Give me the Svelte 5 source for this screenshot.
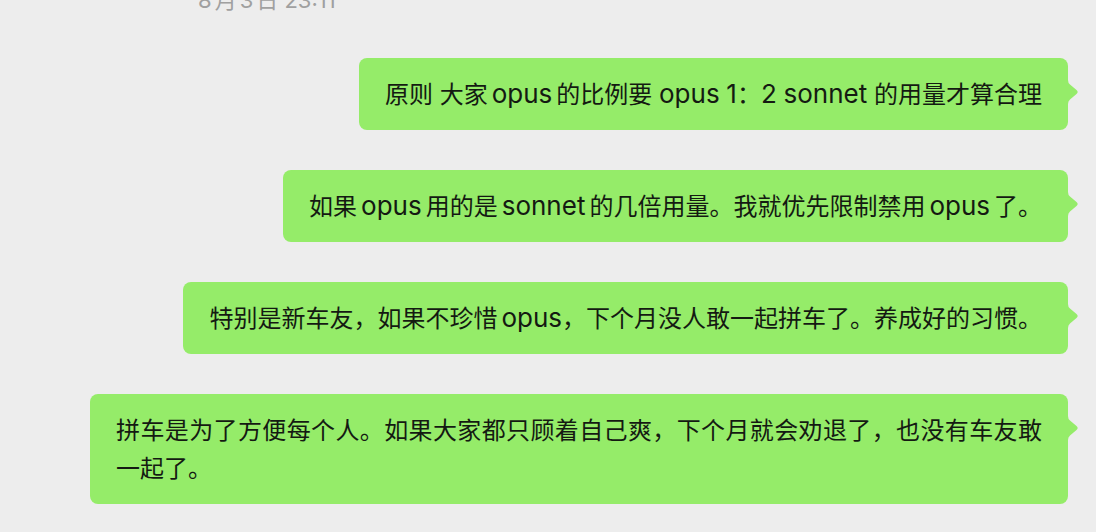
<script>
  const sentAt = '8月3日 23:11';

  const messages = [
    '原则 大家opus的比例要 opus 1：2 sonnet 的用量才算合理',
    '如果opus用的是sonnet的几倍用量。我就优先限制禁用opus了。',
    '特别是新车友，如果不珍惜opus，下个月没人敢一起拼车了。养成好的习惯。',
    '拼车是为了方便每个人。如果大家都只顾着自己爽，下个月就会劝退了，也没有车友敢一起了。'
  ];

  // Splits Latin runs from Chinese text so that each side can be spaced where they touch.
  const isHan = (char) => /[\u4e00-\u9fff]/.test(char ?? '');

  function splitRuns(text) {
    return [...text.matchAll(/[a-z0-9:]+|[^a-z0-9:]+/g)].map((match) => ({
      text: match[0],
      latin: /^[a-z0-9:]/.test(match[0]),
      before: isHan(text[match.index - 1]),
      after: isHan(text[match.index + match[0].length])
    }));
  }
</script>

{#snippet mixed(text)}{#each splitRuns(text) as run}{#if run.latin}<span class="latin" class:before={run.before} class:after={run.after}>{run.text}</span>{:else}{run.text}{/if}{/each}{/snippet}

<main>
  <time>{@render mixed(sentAt)}</time>
  <ol>
    {#each messages as message}
      <li>
        <p>{@render mixed(message)}</p>
        <svg class="tail" viewBox="0 0 10 24" aria-hidden="true">
          <path d="M0 0 Q0 3 2 4.5 L8.5 10 Q10.8 12 8.5 14 L2 19.5 Q0 21 0 24 Z" />
        </svg>
      </li>
    {/each}
  </ol>
</main>

<style>
  :global(body) {
    margin: 0;
    background: #ededed;
  }

  :global(html) {
    overflow: hidden;
  }

  main {
    font-family: Inter, 'Noto Sans CJK SC', sans-serif;
    color: #141a12;
  }

  time {
    display: block;
    height: 12px;
    margin-bottom: 46px;
    padding-left: 198px;
    font-size: 22px;
    line-height: 0;
    color: #a0a0a0;
  }

  ol {
    display: flex;
    flex-direction: column;
    align-items: flex-end;
    gap: 40px;
    margin: 0;
    padding: 0 28px 28px 90px;
    list-style: none;
  }

  li {
    position: relative;
    padding: 18px 26px 16px;
    border-radius: 8px;
    background: #95ec69;
  }

  p {
    margin: 0;
    font-size: 24px;
    line-height: 38px;
    text-align: justify;
  }

  p .latin {
    font-size: 26px;
    line-height: 1;
  }

  .before {
    margin-left: 4px;
  }

  .after {
    margin-right: 4px;
  }

  time .before {
    margin-left: 3px;
  }

  time .after {
    margin-right: 3px;
  }

  .tail {
    position: absolute;
    top: 22px;
    left: 100%;
    width: 10px;
    height: 24px;
    fill: #95ec69;
  }
</style>
